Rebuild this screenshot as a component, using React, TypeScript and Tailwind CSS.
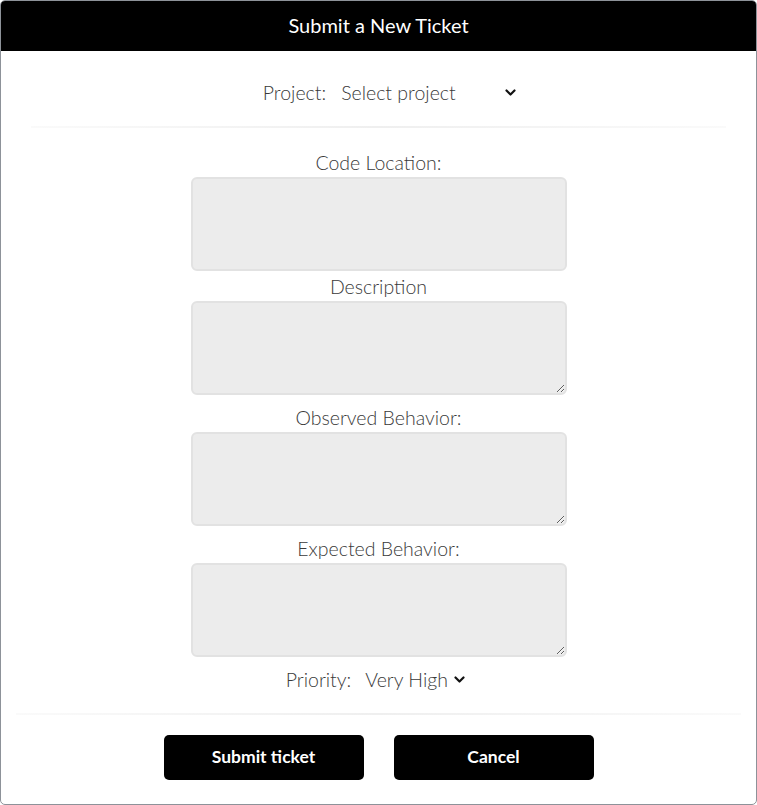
import { useState } from 'react';

const fieldLabels = ['Code Location:', 'Description', 'Observed Behavior:', 'Expected Behavior:'];
const labelGaps = ['mt-[23px]', 'mt-[4px]', 'mt-[11px]', 'mt-[11px]'];

function Chevron() {
  return (
    <svg width="11" height="8" viewBox="0 0 11 8" className="shrink-0">
      <path d="M1.5 1.5 L5.5 5.5 L9.5 1.5" fill="none" stroke="#111" strokeWidth="2.2" strokeLinecap="round" strokeLinejoin="round" />
    </svg>
  );
}

export default function App() {
  const [project, setProject] = useState('');
  const [priority, setPriority] = useState('Very High');
  const [fields, setFields] = useState<string[]>(['', '', '', '']);

  const updateField = (i: number, v: string) => {
    const next = [...fields];
    next[i] = v;
    setFields(next);
  };

  return (
    <div className="h-[805px] w-[757px] bg-white font-['Lato','Liberation_Sans',sans-serif]">
      <div className="flex h-full flex-col overflow-hidden rounded-[5px] border border-[#8d9299]">
        <div className="flex h-[50px] shrink-0 items-center justify-center bg-black pb-[2px] text-[20px] text-white">
          Submit a New Ticket
        </div>

        <div className="mt-[29px] flex h-[26px] items-center justify-center gap-[15px] pl-[22px] text-[19.5px] font-light text-[#3a3a3a]">
          <label htmlFor="project">Project:</label>
          <div className="flex items-center">
            <select
              id="project"
              value={project}
              onChange={(e) => setProject(e.target.value)}
              className="w-[164px] appearance-none bg-transparent text-[19.5px] font-light text-[#3a3a3a] outline-none"
            >
              <option value="">Select project</option>
              <option value="web">Web App</option>
              <option value="api">API</option>
            </select>
            <Chevron />
          </div>
        </div>

        <div className="mx-[30px] mt-[20px] h-[2px] bg-gradient-to-r from-[#fafafa] via-[#efefef] to-[#fafafa]" />

        <div className="flex flex-col items-center">
          {fieldLabels.map((label, i) => (
            <div key={label} className={labelGaps[i] + ' flex flex-col items-center'}>
              <label className="h-[24px] text-[19.5px] leading-[24px] font-light text-[#3a3a3a]">{label}</label>
              <textarea
                value={fields[i]}
                onChange={(e) => updateField(i, e.target.value)}
                className={
                  i === 0
                    ? 'mt-[2px] block h-[94px] w-[376px] resize-none rounded-[6px] border-2 border-[#e2e2e2] bg-[#ececec] outline-none'
                    : 'mt-[2px] block h-[94px] w-[376px] rounded-[6px] border-2 border-[#e2e2e2] bg-[#ececec] outline-none'
                }
              />
            </div>
          ))}
        </div>

        <div className="mt-[11px] flex h-[24px] items-center justify-center gap-[14px] pr-[6px] text-[19.5px] font-light text-[#3a3a3a]">
          <label htmlFor="priority">Priority:</label>
          <div className="flex items-center gap-[5px]">
            <select
              id="priority"
              value={priority}
              onChange={(e) => setPriority(e.target.value)}
              className="appearance-none bg-transparent text-[19.5px] font-light text-[#3a3a3a] outline-none"
            >
              <option>Low</option>
              <option>Medium</option>
              <option>High</option>
              <option>Very High</option>
            </select>
            <Chevron />
          </div>
        </div>

        <div className="mx-[15px] mt-[21px] h-[2px] bg-gradient-to-r from-[#fafafa] via-[#efefef] to-[#fafafa]" />

        <div className="mt-[20px] flex justify-center gap-[30px]">
          <button className="h-[45px] w-[200px] rounded-[5px] bg-black text-[17.5px] font-bold text-white">Submit ticket</button>
          <button className="h-[45px] w-[200px] rounded-[5px] bg-black text-[17.5px] font-bold text-white">Cancel</button>
        </div>
      </div>
    </div>
  );
}
